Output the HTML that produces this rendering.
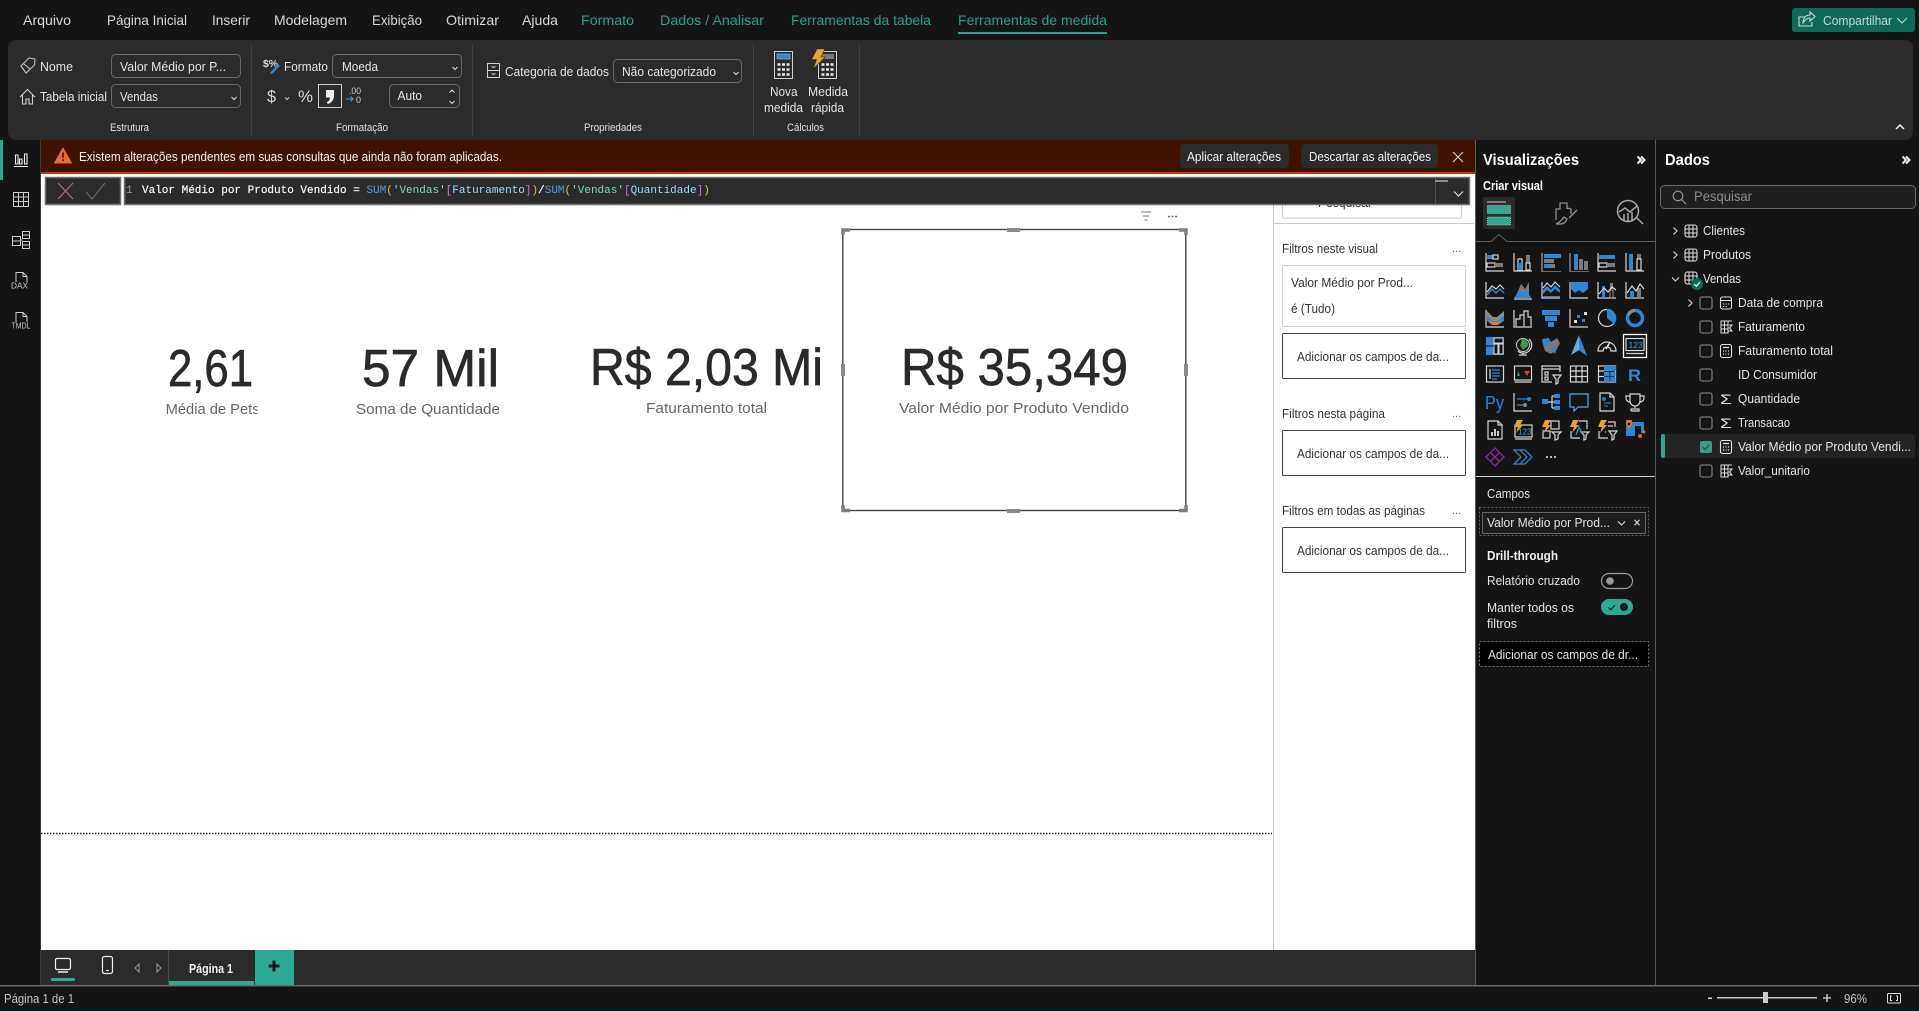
<!DOCTYPE html>
<html lang="pt-BR"><head><meta charset="utf-8"><title>Power BI</title>
<style>
html,body{margin:0;padding:0;width:1919px;height:1011px;overflow:hidden;background:#141414}
svg{display:block}
text{font-family:"Liberation Sans",sans-serif;font-size:13px;fill:#e4e4e4}
.m{font-size:14px;fill:#d8d8d8}
.g{font-size:14px;fill:#22a58c}
.s{font-size:11px;fill:#e0e0e0}
.w{font-size:13px;fill:#f2f2f2}
.d{font-size:13px;fill:#333}
.b{font-weight:bold}
.big{font-size:52px;fill:#2a2a2a;stroke:#2a2a2a;stroke-width:.7}
.lab{font-size:15px;fill:#666}
.f tspan{font-family:"Liberation Mono",monospace}
.f{font-family:"Liberation Mono",monospace;font-size:11px;fill:#fff;stroke:#fff;stroke-width:.15}
.i{fill:none;stroke:#d6d6d6;stroke-width:1.2}
.bl{fill:#2f86d4;stroke:none}
.gr{fill:#7a7a7a;stroke:none}
.bs{fill:none;stroke:#2f86d4;stroke-width:1.4}
.o{fill:#e8a030;stroke:none}
</style></head><body>
<svg width="1919" height="1011" viewBox="0 0 1919 1011" xmlns="http://www.w3.org/2000/svg">
<defs>
<g id="tb"><rect x="-6" y="-6" width="12" height="12" rx="2.5" fill="none" stroke="#e0e0e0" stroke-width="1.1"/><path d="M-2-6V6M2-6V6M-6-2H6M-6 2H6" fill="none" stroke="#e0e0e0" stroke-width="1"/></g>
<g id="ca"><rect x="-5.5" y="-6.5" width="11" height="13" rx="2" fill="none" stroke="#e0e0e0" stroke-width="1.1"/><path d="M-3-3.5H3M-3 0H-2M-.5 0H.5M2 0H3M-3 3H-2M-.5 3H.5M2 3H3" stroke="#e0e0e0" stroke-width="1.2" fill="none"/></g>
<g id="cf"><path d="M-5-6H2V6H-5ZM-5-2H2M-5 2H2M-1.5-6V6M2-6L6-6M3-2H6L3.5 1L6 4H2.5" fill="none" stroke="#e0e0e0" stroke-width="1"/></g>
<g id="cb"><rect x="-6" y="-6" width="12" height="12" rx="2" fill="none" stroke="#8a8a8a" stroke-width="1.1"/></g>
</defs>

<!-- base -->
<rect width="1919" height="1011" fill="#141414"/>
<rect x="8" y="40" width="1905" height="100" rx="8" fill="#2b2b2b"/>

<!-- menu -->
<text class="m" x="23" y="25" textLength="48" lengthAdjust="spacingAndGlyphs">Arquivo</text>
<text class="m" x="107" y="25" textLength="80" lengthAdjust="spacingAndGlyphs">Página Inicial</text>
<text class="m" x="212" y="25" textLength="38" lengthAdjust="spacingAndGlyphs">Inserir</text>
<text class="m" x="274" y="25" textLength="73" lengthAdjust="spacingAndGlyphs">Modelagem</text>
<text class="m" x="372" y="25" textLength="50" lengthAdjust="spacingAndGlyphs">Exibição</text>
<text class="m" x="446" y="25" textLength="53" lengthAdjust="spacingAndGlyphs">Otimizar</text>
<text class="m" x="522" y="25" textLength="36" lengthAdjust="spacingAndGlyphs">Ajuda</text>
<text class="g" x="581" y="25" textLength="53" lengthAdjust="spacingAndGlyphs">Formato</text>
<text class="g" x="660" y="25" textLength="104" lengthAdjust="spacingAndGlyphs">Dados / Analisar</text>
<text class="g" x="791" y="25" textLength="140" lengthAdjust="spacingAndGlyphs">Ferramentas da tabela</text>
<text class="g" x="958" y="25" textLength="149" lengthAdjust="spacingAndGlyphs">Ferramentas de medida</text>
<rect x="958" y="32" width="149" height="2" fill="#22a58c"/>

<!-- share -->
<rect x="1792" y="8" width="123" height="24" rx="3" fill="#0e6a58"/>
<path d="M1805 17H1799V26H1812V22M1803 23C1803 18 1806 15 1810 15V12L1815 16.500L1810 21V18C1807 18 1805 20 1803 23Z" fill="none" stroke="#c8d8d4" stroke-width="1.1"/>
<text x="1823" y="25" textLength="69" lengthAdjust="spacingAndGlyphs" style="font-size:13px;fill:#c6d6d2">Compartilhar</text>
<path d="M1897 18L1902 23L1907 18" fill="none" stroke="#c6d6d2" stroke-width="1.1"/>

<!-- ribbon: estrutura -->
<path d="M21 66L29 58L35 59L34.500 65L26 73ZM24 64L30 69" fill="none" stroke="#bdbdbd" stroke-width="1.1"/>
<text x="40" y="71" textLength="33" lengthAdjust="spacingAndGlyphs">Nome</text>
<rect x="111.500" y="54.500" width="129" height="23" rx="4" fill="#2b2b2b" stroke="#6a6a6a"/>
<text x="120" y="71" textLength="106" lengthAdjust="spacingAndGlyphs">Valor Médio por P...</text>
<path d="M20 97L27.500 89.500L35 97M22.500 95V104H26V99H29V104H32.500V95" fill="none" stroke="#cfcfcf" stroke-width="1.1"/>
<text x="40" y="101" textLength="67" lengthAdjust="spacingAndGlyphs">Tabela inicial</text>
<rect x="111.500" y="84.500" width="129" height="23" rx="4" fill="#2b2b2b" stroke="#6a6a6a"/>
<text x="120" y="101" textLength="38" lengthAdjust="spacingAndGlyphs">Vendas</text>
<path d="M231.500 97L234 99.500L236.500 97" fill="none" stroke="#ddd" stroke-width="1.1"/>
<rect x="251" y="44" width="1" height="92" fill="#3f3f3f"/>
<text class="s" x="110" y="131" textLength="39" lengthAdjust="spacingAndGlyphs">Estrutura</text>

<!-- formatacao -->
<text x="263" y="67" style="font-size:10px;font-weight:bold;fill:#ddd" textLength="15" lengthAdjust="spacingAndGlyphs">$%</text>
<path d="M270 73L278 64L280 66L272 74Z" fill="#2f86d4"/>
<text x="284" y="71" textLength="44" lengthAdjust="spacingAndGlyphs">Formato</text>
<rect x="332.500" y="54.500" width="129" height="23" rx="4" fill="#2b2b2b" stroke="#6a6a6a"/>
<text x="342" y="71" textLength="36" lengthAdjust="spacingAndGlyphs">Moeda</text>
<path d="M452.500 67L455 69.500L457.500 67" fill="none" stroke="#ddd" stroke-width="1.1"/>
<text x="267" y="102" style="font-size:17px;fill:#d8d8d8" textLength="9" lengthAdjust="spacingAndGlyphs">$</text>
<path d="M285 97.500L287 99.500L289 97.500" fill="none" stroke="#ccc" stroke-width="1"/>
<text x="298" y="102" style="font-size:17px;fill:#d8d8d8" textLength="15" lengthAdjust="spacingAndGlyphs">%</text>
<rect x="318.500" y="84.500" width="23" height="23" fill="none" stroke="#cfcfcf"/>
<path d="M326 90H334V96C334 100 331 103 328 104L326.500 102.500C328.500 101.500 330 100 330 97.500H326Z" fill="#f0f0f0"/>
<text x="349" y="94" style="font-size:9px;fill:#ccc" textLength="12" lengthAdjust="spacingAndGlyphs">.00</text>
<path d="M346 99H353M350.500 96.500L353 99L350.500 101.500" fill="none" stroke="#3f9be6" stroke-width="1.1"/>
<text x="356" y="103" style="font-size:9px;fill:#ccc" textLength="5" lengthAdjust="spacingAndGlyphs">0</text>
<rect x="389.500" y="84.500" width="70" height="23" rx="4" fill="#2b2b2b" stroke="#6a6a6a"/>
<text x="397.500" y="100" textLength="24.500" lengthAdjust="spacingAndGlyphs">Auto</text>
<path d="M449.500 92.500L452 90L454.500 92.500M449.500 101L452 103.500L454.500 101" fill="none" stroke="#ddd" stroke-width="1.1"/>
<rect x="472" y="44" width="1" height="92" fill="#3f3f3f"/>
<text class="s" x="336" y="131" textLength="52" lengthAdjust="spacingAndGlyphs">Formatação</text>

<!-- propriedades -->
<path d="M487.500 63.500H499.500V77.500H487.500ZM487.500 70.500H499.500M491.500 66.500L493.500 67.500L495.500 66.500M491.500 73.500L493.500 74.500L495.500 73.500" fill="none" stroke="#d0d0d0" stroke-width="1"/>
<text x="505" y="76" textLength="104" lengthAdjust="spacingAndGlyphs">Categoria de dados</text>
<rect x="613.500" y="59.500" width="128" height="23" rx="4" fill="#2b2b2b" stroke="#6a6a6a"/>
<text x="622" y="76" textLength="94" lengthAdjust="spacingAndGlyphs">Não categorizado</text>
<path d="M733.500 72L736 74.500L738.500 72" fill="none" stroke="#ddd" stroke-width="1.1"/>
<rect x="753" y="44" width="1" height="92" fill="#3f3f3f"/>
<text class="s" x="584" y="131" textLength="58" lengthAdjust="spacingAndGlyphs">Propriedades</text>

<!-- calculos -->
<rect x="774.500" y="51.500" width="18" height="27" fill="#2b2b2b" stroke="#d0d0d0"/>
<rect x="777" y="54" width="13" height="5" fill="#2f86d4" stroke="#9cc4e8" stroke-width=".6"/>
<path d="M777.500 64.500H780.500M782 64.500H785M786.500 64.500H789.500M777.500 69.500H780.500M782 69.500H785M786.500 69.500H789.500M777.500 74.500H780.500M782 74.500H785M786.500 74.500H789.500" stroke="#e8e8e8" stroke-width="2.500" fill="none"/>
<rect x="818.500" y="51.500" width="18" height="27" fill="#2b2b2b" stroke="#d0d0d0"/>
<rect x="821" y="54" width="13" height="5" fill="#7a7a7a"/>
<path d="M821.500 64.500H824.500M826 64.500H829M830.500 64.500H833.500M821.500 69.500H824.500M826 69.500H829M830.500 69.500H833.500M821.500 74.500H824.500M826 74.500H829M830.500 74.500H833.500" stroke="#e8e8e8" stroke-width="2.500" fill="none"/>
<path d="M817 49H825L821 57H825.500L813 69L816.500 59.500H811.500Z" fill="#eca02e" stroke="#2b2b2b" stroke-width=".6"/>
<text x="770" y="96" textLength="27.500" lengthAdjust="spacingAndGlyphs">Nova</text>
<text x="764" y="112" textLength="39" lengthAdjust="spacingAndGlyphs">medida</text>
<text x="808" y="96" textLength="40" lengthAdjust="spacingAndGlyphs">Medida</text>
<text x="811" y="112" textLength="33" lengthAdjust="spacingAndGlyphs">rápida</text>
<rect x="859" y="44" width="1" height="92" fill="#3f3f3f"/>
<text class="s" x="787" y="131" textLength="37" lengthAdjust="spacingAndGlyphs">Cálculos</text>
<path d="M1896 129L1900 125L1904 129" fill="none" stroke="#e6e6e6" stroke-width="1.6"/>

<!-- canvas -->
<rect x="41" y="172" width="1434" height="778" fill="#fff"/>
<rect x="40" y="140" width="1435" height="32" fill="#3f1300"/>
<rect x="40" y="172" width="1435" height="2" fill="#c43d00"/>
<path d="M63 148L71.500 163H54.500Z" fill="#e8683a" stroke="#e8683a" stroke-linejoin="round"/>
<rect x="62.200" y="152.500" width="1.600" height="5.500" fill="#3f1300"/><rect x="62.200" y="159.200" width="1.600" height="1.700" fill="#3f1300"/>
<text class="w" x="79" y="161" textLength="423" lengthAdjust="spacingAndGlyphs">Existem alterações pendentes em suas consultas que ainda não foram aplicadas.</text>
<rect x="1180" y="144" width="109" height="24" rx="4" fill="#2b2b2b"/>
<text class="w" x="1187" y="161" textLength="94" lengthAdjust="spacingAndGlyphs">Aplicar alterações</text>
<rect x="1301" y="144" width="137" height="24" rx="4" fill="#2b2b2b"/>
<text class="w" x="1309" y="161" textLength="122" lengthAdjust="spacingAndGlyphs">Descartar as alterações</text>
<path d="M1453 152L1463 162M1463 152L1453 162" stroke="#d8d8d8" stroke-width="1" fill="none"/>

<!-- filter pane -->
<rect x="1273" y="205" width="1" height="745" fill="#c8c8c8"/>
<rect x="1282.500" y="190" width="179" height="28" rx="1" fill="#fff" stroke="#c8c8c8"/>
<text class="d" x="1318" y="207" textLength="54" lengthAdjust="spacingAndGlyphs">Pesquisar</text>
<path d="M1307 199L1304 202L1307 205" fill="none" stroke="#555"/>
<rect x="1273" y="223" width="201" height="1" fill="#c8c8c8"/>
<text class="d" x="1282" y="253" textLength="96" lengthAdjust="spacingAndGlyphs">Filtros neste visual</text>
<text class="d" x="1452" y="252" style="font-size:11px;fill:#666">...</text>
<rect x="1282.500" y="265.500" width="183" height="61" rx="1" fill="#fff" stroke="#d0d0d0"/>
<text class="d" x="1291" y="287" textLength="122" lengthAdjust="spacingAndGlyphs">Valor Médio por Prod...</text>
<text class="d" x="1291" y="313" textLength="44" lengthAdjust="spacingAndGlyphs">é (Tudo)</text>
<rect x="1282.500" y="333.500" width="183" height="45" rx="1" fill="#fff" stroke="#444"/>
<text class="d" x="1297" y="361" textLength="152" lengthAdjust="spacingAndGlyphs">Adicionar os campos de da...</text>
<text class="d" x="1282" y="418" textLength="103" lengthAdjust="spacingAndGlyphs">Filtros nesta página</text>
<text class="d" x="1452" y="417" style="font-size:11px;fill:#666">...</text>
<rect x="1282.500" y="430.500" width="183" height="45" rx="1" fill="#fff" stroke="#444"/>
<text class="d" x="1297" y="458" textLength="152" lengthAdjust="spacingAndGlyphs">Adicionar os campos de da...</text>
<text class="d" x="1282" y="515" textLength="143" lengthAdjust="spacingAndGlyphs">Filtros em todas as páginas</text>
<text class="d" x="1452" y="514" style="font-size:11px;fill:#666">...</text>
<rect x="1282.500" y="527.500" width="183" height="45" rx="1" fill="#fff" stroke="#444"/>
<text class="d" x="1297" y="555" textLength="152" lengthAdjust="spacingAndGlyphs">Adicionar os campos de da...</text>

<!-- formula bar -->
<rect x="45.500" y="177.500" width="75" height="27" fill="#2b2b2b" stroke="#6e6e6e" stroke-width="1.500"/>
<path d="M58 183L73 199M73 183L58 199" stroke="#c06a74" stroke-width="1.200" fill="none"/>
<path d="M86 192L92 199L105 183" stroke="#6a6a6a" stroke-width="1.200" fill="none"/>
<rect x="124.500" y="177.500" width="1345" height="27" fill="#2b2b2b" stroke="#6e6e6e" stroke-width="1.500"/>
<text class="f" x="126" y="193" style="stroke:none"><tspan fill="#9a9a9a">1</tspan></text>
<text class="f" x="142" y="193">Valor Médio por Produto Vendido = <tspan fill="#4f9fe0" stroke="none">SUM</tspan><tspan fill="#e6c04a" stroke="none">(</tspan><tspan fill="#7fd6c4" stroke="none">'Vendas'</tspan><tspan fill="#d070d8" stroke="none">[</tspan><tspan fill="#9cdcfe" stroke="none">Faturamento</tspan><tspan fill="#d070d8" stroke="none">]</tspan><tspan fill="#e6c04a" stroke="none">)</tspan>/<tspan fill="#4f9fe0" stroke="none">SUM</tspan><tspan fill="#e6c04a" stroke="none">(</tspan><tspan fill="#7fd6c4" stroke="none">'Vendas'</tspan><tspan fill="#d070d8" stroke="none">[</tspan><tspan fill="#9cdcfe" stroke="none">Quantidade</tspan><tspan fill="#d070d8" stroke="none">]</tspan><tspan fill="#e6c04a" stroke="none">)</tspan></text>
<rect x="1435" y="178" width="1" height="26" fill="#555"/>
<rect x="1435" y="180" width="13" height="2" fill="#8a8a8a"/>
<path d="M1454 191.500L1458.500 196L1463 191.500" fill="none" stroke="#ddd" stroke-width="1.200"/>

<!-- visuals -->
<text class="big" x="168" y="386" textLength="85" lengthAdjust="spacingAndGlyphs">2,61</text>
<svg x="160" y="395" width="97.500" height="25" overflow="hidden"><text class="lab" x="5.600" y="19" textLength="94" lengthAdjust="spacingAndGlyphs">Média de Pets</text></svg>
<text class="big" x="362" y="386" textLength="137" lengthAdjust="spacingAndGlyphs">57 Mil</text>
<text class="lab" x="356" y="414" textLength="144" lengthAdjust="spacingAndGlyphs">Soma de Quantidade</text>
<text class="big" x="590" y="385" textLength="233" lengthAdjust="spacingAndGlyphs">R$ 2,03 Mi</text>
<text class="lab" x="646" y="413" textLength="121" lengthAdjust="spacingAndGlyphs">Faturamento total</text>
<rect x="842.800" y="229.500" width="343" height="281" fill="none" stroke="#444" stroke-width="1.400"/>
<text class="big" x="901" y="385" textLength="227" lengthAdjust="spacingAndGlyphs">R$ 35,349</text>
<text class="lab" x="899" y="413" textLength="230" lengthAdjust="spacingAndGlyphs">Valor Médio por Produto Vendido</text>
<path d="M843 235V230H850M1179 230H1186V235M843 505V510.500H850M1179 510.500H1186V505" fill="none" stroke="#808080" stroke-width="3.500"/>
<rect x="1007" y="228" width="13" height="4" fill="#8a8a8a"/><rect x="1007" y="509" width="13" height="4" fill="#8a8a8a"/>
<rect x="841" y="364" width="4" height="12" fill="#8a8a8a"/><rect x="1184" y="364" width="4" height="12" fill="#8a8a8a"/>
<path d="M1141 212H1151M1143 216H1149M1144.500 220H1147.500" stroke="#777" fill="none"/>
<path d="M1168 216.500H1170M1171.500 216.500H1173.500M1175 216.500H1177" stroke="#666" stroke-width="1.400" fill="none"/>
<path d="M41 833.500H1272" stroke="#222" stroke-width="1.500" stroke-dasharray="1.500 1.500" fill="none"/>

<!-- left rail -->
<rect x="40" y="140" width="1" height="845" fill="#3a3a3a"/>
<rect x="0" y="140" width="3" height="40" fill="#2bab92"/>
<path d="M14 166.500H28M15.500 155V164H18V155ZM19.500 159V164H22V159ZM24.500 154V164H27V154Z" fill="none" stroke="#eee" stroke-width="1.100"/>
<path d="M13.500 192.500H28.500V206.500H13.500ZM13.500 197H28.500M13.500 201.500H28.500M18.500 192.500V206.500M23.500 192.500V206.500" fill="none" stroke="#cfcfcf"/>
<path d="M12.500 236.500H20.500V245.500H12.500ZM12.500 241H20.500M22.500 231.500H29.500V238.500H22.500ZM22.500 235H29.500M22.500 241.500H29.500V248.500H22.500ZM22.500 245H29.500M20.500 240H22.500" fill="none" stroke="#cfcfcf"/>
<path d="M16 282V272.500H23L27 276.500V282M23 272.500V276.500H27" fill="none" stroke="#cfcfcf"/>
<text x="11" y="288.500" style="font-size:8px;fill:#c8c8c8" textLength="17" lengthAdjust="spacingAndGlyphs">DAX</text>
<path d="M16 322V312.500H23L27 316.500V322M23 312.500V316.500H27" fill="none" stroke="#cfcfcf"/>
<text x="11.500" y="328.500" style="font-size:8px;fill:#c8c8c8" textLength="19" lengthAdjust="spacingAndGlyphs">TMDL</text>

<!-- bottom tabs -->
<rect x="41" y="950" width="1434" height="35" fill="#2b2b2b"/>
<rect x="55.500" y="958.500" width="15" height="11" rx="1.500" fill="none" stroke="#eee" stroke-width="1.200"/>
<path d="M58 972H68" stroke="#eee" stroke-width="1.500"/>
<rect x="51" y="978" width="24" height="3" rx="1" fill="#2bab92"/>
<rect x="102.500" y="956.500" width="10" height="17" rx="2" fill="none" stroke="#eee" stroke-width="1.200"/>
<path d="M106 970.500H109" stroke="#eee"/>
<path d="M139 964V972L135 968Z" fill="none" stroke="#999"/>
<path d="M157 964V972L161 968Z" fill="none" stroke="#999"/>
<rect x="168" y="950" width="1" height="35" fill="#4a4a4a"/>
<text class="b" x="189" y="973" textLength="44" lengthAdjust="spacingAndGlyphs" style="font-size:13px;fill:#f2f2f2">Página 1</text>
<rect x="169" y="981" width="85" height="4" fill="#2bab92"/>
<rect x="255" y="950" width="39" height="35" fill="#2bab92"/>
<path d="M268.500 966H279.500M274 960.500V971.500" stroke="#1a1a1a" stroke-width="3"/>
<rect x="0" y="985" width="1919" height="1.500" fill="#6a6a6a"/>
<text x="4" y="1003" textLength="70" lengthAdjust="spacingAndGlyphs" style="font-size:13px;fill:#c4c4c4">Página 1 de 1</text>
<rect x="1708" y="997.500" width="4" height="1.500" fill="#ddd"/>
<rect x="1717" y="997" width="100" height="1.500" fill="#ccc"/>
<rect x="1763" y="992" width="5" height="11" fill="#ccc"/>
<path d="M1823 998H1831M1827 994V1002" stroke="#ddd" stroke-width="1.300"/>
<text x="1844" y="1003" textLength="23" lengthAdjust="spacingAndGlyphs" style="font-size:13px;fill:#c4c4c4">96%</text>
<rect x="1887.500" y="993.500" width="13" height="9.500" rx="1" fill="none" stroke="#ddd"/>
<path d="M1892 996H1890.500V1000.500H1892M1896 996H1897.500V1000.500H1896" fill="none" stroke="#ddd"/>
<rect x="0" y="1009" width="1919" height="2" fill="#0b1a1f"/>

<!-- panel dividers -->
<rect x="1475" y="140" width="1" height="845" fill="#5a5a5a"/>
<rect x="1655" y="140" width="1" height="845" fill="#5a5a5a"/>

<!-- Visualizacoes -->
<text class="b" x="1483" y="165" textLength="96" lengthAdjust="spacingAndGlyphs" style="font-size:16px;fill:#fff">Visualizações</text>
<path d="M1637.500 156.500L1641 160L1637.500 163.500M1641 156.500L1644.500 160L1641 163.500" fill="none" stroke="#f0f0f0" stroke-width="2"/>
<text class="b" x="1483" y="190" textLength="60" lengthAdjust="spacingAndGlyphs" style="font-size:12.500px;fill:#fff">Criar visual</text>
<rect x="1483" y="197" width="32" height="32" rx="2" fill="#2b2b2b"/>
<path d="M1487 202H1506" stroke="#cfcfcf" stroke-width="1"/>
<rect x="1487.500" y="205.500" width="23" height="8" fill="#2bab92" stroke="#cfcfcf" stroke-width=".8" stroke-dasharray="1 1"/>
<rect x="1487.500" y="217" width="23" height="8" fill="#2bab92" stroke="#cfcfcf" stroke-width=".8" stroke-dasharray="1 1"/>
<path d="M1556 220V209H1560V203H1567V209M1567 208L1571 209V214M1569 218L1577 210M1560 224C1564 224 1566 222 1567 219L1564 217C1562 219 1561 222 1556 224H1560Z" fill="none" stroke="#8f8f8f" stroke-width="1.300"/>
<circle cx="1628" cy="211" r="10.500" fill="none" stroke="#a8a8a8" stroke-width="1.500"/>
<path d="M1619 212L1625 208L1630 212L1637 206M1624 220V214M1628 221V213M1632 220V212M1636 217L1643 224" fill="none" stroke="#a8a8a8" stroke-width="1.500"/>
<path d="M1476 241.500H1491L1499 234.500L1507 241.500H1655" fill="none" stroke="#5f5f5f" stroke-width="1"/>

<!-- grid row 1 -->
<g transform="translate(1495 262)"><path class="i" d="M-9-9V9H9"/><rect class="bl" x="-8" y="-7" width="6" height="4"/><rect class="i" x="-2" y="-7" width="5" height="4"/><rect class="i" x="-8" y="1" width="8" height="4"/><rect class="gr" x="0" y="1" width="8" height="4"/></g>
<g transform="translate(1523 262)"><path class="i" d="M-9-9V9H9"/><rect class="i" x="-5" y="-3" width="4" height="11"/><rect class="bl" x="-5" y="1" width="4" height="7"/><rect class="gr" x="3" y="-7" width="4" height="8"/><rect class="i" x="3" y="1" width="4" height="7"/></g>
<g transform="translate(1551 262)"><path d="M-10-9H-8V9H10V10H-10Z" fill="#6a6a6a"/><rect class="bl" x="-7" y="-8" width="17" height="4"/><rect class="gr" x="-7" y="-3" width="10" height="4"/><rect class="bl" x="-7" y="2" width="5" height="4"/><rect class="gr" x="-2" y="2" width="6" height="4"/></g>
<g transform="translate(1579 262)"><path d="M-10-9H-8V9H10V10H-10Z" fill="#6a6a6a"/><rect class="bl" x="-5" y="-8" width="4" height="16"/><rect class="gr" x="0" y="-3" width="4" height="11"/><rect class="gr" x="5" y="-1" width="4" height="9"/></g>
<g transform="translate(1607 262)"><path class="i" d="M-9-9V9H9"/><rect class="bl" x="-8" y="-7" width="16" height="4"/><rect class="i" x="-8" y="1" width="8" height="4"/><rect class="gr" x="0" y="1" width="8" height="4"/></g>
<g transform="translate(1635 262)"><path class="i" d="M-9-9V9H9"/><rect class="bl" x="-6" y="-8" width="4" height="16"/><rect class="gr" x="2" y="-8" width="4" height="5"/><rect class="i" x="2" y="-3" width="4" height="11"/></g>
<!-- row 2 -->
<g transform="translate(1495 290)"><path class="i" d="M-9-8V8H9"/><path class="i" d="M-8 2L-3-4L1-1L5-5L9-1"/><path class="bs" d="M-8 5L-3-1L1 3L5-1L9 3"/></g>
<g transform="translate(1523 290)"><path d="M-8 8L-2-6L2-1L6-8V8Z" fill="#7a7a7a"/><path d="M-9 8L-3 0L1 3L4 0L8 8Z" fill="#2f86d4"/><path class="i" d="M-9 9H9"/></g>
<g transform="translate(1551 290)"><path class="i" d="M-9-8V8H9"/><path class="i" d="M-8-2L-4-7L0-3L4-8L9-3"/><path d="M-8 0L-4-4L0 0L4-5L9 0V7H-8Z" fill="#2f86d4"/><path d="M-8 4L-4 0L0 3L4-1L9 3V6H-8Z" fill="#141414"/></g>
<g transform="translate(1579 290)"><path class="i" d="M-9-8V8H9"/><path d="M-8-8H9V-1L4 3L0 0L-4 3L-8-1Z" fill="#2f86d4"/></g>
<g transform="translate(1607 290)"><path class="i" d="M-9-8V8H9"/><rect class="bl" x="-5" y="-4" width="3" height="12"/><rect class="gr" x="3" y="-7" width="3" height="6"/><path class="i" d="M-8 4L-3-2L1 2L5-3L9 0"/><rect x="3" y="0" width="3" height="8" fill="none" stroke="#aaa" stroke-width=".8"/></g>
<g transform="translate(1635 290)"><path class="i" d="M-9-8V8H9"/><rect class="gr" x="2" y="-2" width="4" height="10"/><rect class="bl" x="-5" y="1" width="4" height="7"/><path class="i" d="M-8 3L-3-4L1 1L5-6L9-1"/></g>
<!-- row 3 -->
<g transform="translate(1495 318)"><path class="i" d="M-9-8V9H9"/><path d="M-8-7L-2-1L2-1L9-7V-2L3 3H-3L-8-2Z" fill="#8a8a8a"/><path d="M-8-2L-3 3L3 3L9-2V3L3 7H-3L-8 3Z" fill="#2f86d4"/><path d="M-7 2L-3 7H3L7 2L3 4H-3Z" fill="#e87a20"/></g>
<g transform="translate(1523 318)"><path class="i" d="M-9-8V9H9"/><path class="i" d="M-7 8V1H-3V-3H1V8M1-3V-7H5V-1H8V8"/></g>
<g transform="translate(1551 318)"><rect class="bl" x="-9" y="-8" width="18" height="5"/><rect class="bl" x="-6" y="-2" width="12" height="5"/><rect class="bl" x="-3" y="4" width="6" height="5"/></g>
<g transform="translate(1579 318)"><path class="i" d="M-9-9V9H9"/><rect x="5" y="-6" width="3" height="3" fill="#ddd"/><rect class="bl" x="-2" y="-3" width="3" height="3"/><rect class="bl" x="3" y="1" width="3" height="3"/><rect x="-5" y="2" width="3" height="3" fill="#ddd"/></g>
<g transform="translate(1607 318)"><circle class="i" r="8.500"/><path class="bl" d="M0-9A9 9 0 0 1 7 6L0 0Z"/></g>
<g transform="translate(1635 318)"><circle r="7.500" fill="none" stroke="#2f86d4" stroke-width="3.500"/><path d="M0-9A9 9 0 0 0-8-4L-5-2.500A6 6 0 0 1 0-6Z" fill="#8a8a8a"/></g>
<!-- row 4 -->
<g transform="translate(1495 346)"><rect x="-9" y="-9" width="18" height="18" fill="#2f86d4"/><rect x="-1" y="-8" width="9" height="5" fill="#141414" stroke="#d6d6d6"/><rect x="-1" y="-2" width="4" height="10" fill="#141414" stroke="#d6d6d6"/><rect x="4" y="-2" width="4" height="10" fill="#141414" stroke="#d6d6d6"/><path d="M-9 0H-1" stroke="#141414"/></g>
<g transform="translate(1523 346)"><circle cy="-1" r="6.500" fill="#141414" stroke="#cfcfcf"/><path d="M-1-7C3-7 6-3 5 0L0 4L-3 0Z" fill="#2f9a58"/><path class="i" d="M-5 5A8 8 0 0 0 6-7M-4 9H4M0 7V9"/></g>
<g transform="translate(1551 346)"><path d="M-9-5L-3-8L0-4L6-8L9-3L6 3L0 8L-6 5Z" fill="#7a7a7a"/><path d="M-9-7L-2-8L-1-1L-7 1ZM0 3L7-1L4 8Z" fill="#2f86d4"/></g>
<g transform="translate(1579 346)"><path d="M0-11L-8 9L0 4Z" fill="#59b4d9"/><path d="M0-11L8 10L0 4Z" fill="#2f86d4"/></g>
<g transform="translate(1607 346)"><path class="i" d="M-9 5A9 9 0 0 1 9 5H4A4 4 0 0 0-4 5Z"/><path d="M-1 3L3-4" stroke="#eee" stroke-width="1.500"/></g>
<rect x="1623.500" y="334.500" width="23" height="23" fill="none" stroke="#fff" stroke-width="1.300"/>
<g transform="translate(1635 346)"><rect class="i" x="-9" y="-7.500" width="18" height="12"/><path class="i" d="M-9 7.500H9"/><text x="-6.500" y="2.200" style="font-size:8.500px;fill:#4a9be0">123</text></g>
<!-- row 5 -->
<g transform="translate(1495 374)"><rect class="i" x="-8.500" y="-8" width="17" height="16"/><path class="i" d="M-5-5V5"/><path d="M-3-4H5M-3-1H5M-3 2H5M-3 5H2" stroke="#2f86d4" stroke-width="1.300"/></g>
<g transform="translate(1523 374)"><rect class="i" x="-8.500" y="-8" width="17" height="14"/><path class="i" d="M-8.500 8H8.500"/><path d="M-3 2L-6 2L-4.500-3Z" fill="#2f9a58"/><path d="M1-3H7L4 2Z" fill="#d83b3b"/></g>
<g transform="translate(1551 374)"><path class="i" d="M9-2V-8H-9V8H1M-9-5H9"/><rect class="i" x="-6" y="-2" width="3" height="3"/><rect class="i" x="-6" y="3" width="3" height="3"/><path class="i" d="M2 1H10L7 5V9L5 10V5Z"/></g>
<g transform="translate(1579 374)"><rect class="i" x="-8.500" y="-8" width="17" height="16"/><path class="i" d="M-8.500-3H8.500M-8.500 2.500H8.500M-3-8V8M3-8V8"/></g>
<g transform="translate(1607 374)"><rect class="i" x="-8.500" y="-8" width="17" height="16"/><rect class="bl" x="-3" y="-8" width="12" height="5"/><rect class="bl" x="-3" y="-2.200" width="5.500" height="4.500"/><rect class="bl" x="3.200" y="-2.200" width="5.500" height="4.500"/><rect class="bl" x="-3" y="3" width="5.500" height="5"/><rect class="bl" x="3.200" y="3" width="5.500" height="5"/><path class="i" d="M-8.500-3H-3M-8.500 2.500H-3"/></g>
<text x="1628" y="381" style="font-size:17px;font-weight:bold;fill:#2f86d4" textLength="13" lengthAdjust="spacingAndGlyphs">R</text>
<!-- row 6 -->
<text x="1485" y="409" style="font-size:18px;fill:#2f86d4" textLength="19" lengthAdjust="spacingAndGlyphs">Py</text>
<g transform="translate(1523 402)"><path class="i" d="M-9-9V9H9"/><path d="M-6-3H4M-6 3H0" stroke="#2f86d4" stroke-width="1.200"/><circle cx="6" cy="-3" r="2" fill="#2f86d4"/><circle cx="2" cy="3" r="2" fill="#8a8a8a"/></g>
<g transform="translate(1551 402)"><rect class="bl" x="-9" y="-3" width="6" height="5"/><rect class="bl" x="3" y="-8" width="6" height="4"/><rect class="bl" x="3" y="-2" width="6" height="4"/><rect class="bl" x="3" y="4" width="6" height="4"/><path class="i" d="M-3 0H1M1-6V6M1-6H3M1 0H3M1 6H3"/></g>
<g transform="translate(1579 402)"><path fill="none" stroke="#59a8e8" stroke-width="1.200" d="M-9-8H9V5H-1L-5 9V5H-9Z"/></g>
<g transform="translate(1607 402)"><path class="i" d="M-7-9H3L7-5V9H-7ZM3-9V-5H7"/><circle cx="-3" cy="-3" r="1.200" class="bs"/><path d="M-3 1H4M-3 4H1" stroke="#2f86d4"/></g>
<g transform="translate(1635 402)"><path class="i" d="M-5-8H5V-1A5 5 0 0 1-5-1ZM-5-6H-9V-4A4 4 0 0 0-5 0M5-6H9V-4A4 4 0 0 1 5 0M0 4V6M-4 9V7H4V9H-4"/></g>
<!-- row 7 -->
<g transform="translate(1495 430)"><path class="i" d="M-7-9H3L7-5V9H-7ZM3-9V-5H7"/><rect x="-4" y="2" width="2" height="4" fill="#ccc"/><rect x="-1" y="-1" width="2" height="7" fill="#ccc"/><rect x="2" y="1" width="2" height="5" fill="#ccc"/></g>
<g transform="translate(1523 430)"><rect class="i" x="-8" y="-5" width="17" height="12"/><path class="i" d="M-8 9H9"/><text x="-5" y="4.500" style="font-size:8px;fill:#4a9be0">123</text><path class="o" d="M-6-10H0L-3-5H0L-7 3L-5-3H-9Z"/></g>
<g transform="translate(1551 430)"><rect class="i" x="0" y="-9" width="8" height="8"/><rect class="i" x="-8" y="1" width="7" height="7"/><path class="i" d="M1 2H10L7 5V9L4 10V5Z"/><path class="o" d="M-6-10H0L-3-5H0L-7 3L-5-3H-9Z"/></g>
<g transform="translate(1579 430)"><path class="i" d="M0-9H8V-1M-8 1V8H1"/><path class="i" d="M2 2H10L7 5V9L5 10V5Z"/><path class="bs" d="M-3 5L0-3L3 3"/><path class="o" d="M-6-10H0L-3-5H0L-7 3L-5-3H-9Z"/></g>
<g transform="translate(1607 430)"><path class="i" d="M1-8H8V-3M-8 1V8H1M1-4H6M-2 2H-1"/><path class="i" d="M2 1H10L7 5V9L5 10V5Z"/><path class="o" d="M-6-10H0L-3-5H0L-7 3L-5-3H-9Z"/></g>
<g transform="translate(1635 430)"><path class="bl" d="M-4-8H9V3H6V-4H-4Z"/><path d="M-9-4L0-4V6H-9Z" fill="#2f86d4"/><path d="M-9-10H-3V-5L-6-1L-9-5Z" fill="#e0711c"/><circle cx="-6" cy="-6" r="1.200" fill="#141414"/><circle cx="5" cy="6" r="2" fill="#e0711c"/><circle cx="9" cy="2" r="1.500" fill="#e0711c"/></g>
<!-- row 8 -->
<g transform="translate(1495 457)" fill="none" stroke="#8a2aa8" stroke-width="1.300"><path d="M0-9L9 0L0 9L-9 0ZM-4.500-4.500L4.500 4.500M4.500-4.500L-4.500 4.500"/></g>
<g transform="translate(1523 457)" fill="none" stroke="#2f86d4" stroke-width="1.300"><path d="M-9-7H2L9 0L2 7H-9L-2 0ZM-3-7L4 0L-3 7"/></g>
<path d="M1546 457H1548M1550 457H1552M1554 457H1556" stroke="#f2f2f2" stroke-width="1.600"/>

<!-- campos -->
<rect x="1476" y="476" width="179" height="1" fill="#cfcfcf"/>
<text x="1487" y="498" textLength="43" lengthAdjust="spacingAndGlyphs">Campos</text>
<rect x="1479.500" y="507.500" width="169" height="28" fill="none" stroke="#666" stroke-dasharray="2 2"/>
<rect x="1482.500" y="512.500" width="163" height="21" fill="#1c1c1c" stroke="#666"/>
<text x="1487" y="527" textLength="123" lengthAdjust="spacingAndGlyphs">Valor Médio por Prod...</text>
<path d="M1618 521.500L1621.500 525L1625 521.500" fill="none" stroke="#ddd" stroke-width="1.100"/>
<path d="M1634.500 519.800L1639.500 525.200M1639.500 519.800L1634.500 525.200" fill="none" stroke="#ddd" stroke-width="1.100"/>
<text class="b" x="1487" y="560" textLength="71" lengthAdjust="spacingAndGlyphs" style="font-size:13px;fill:#f2f2f2">Drill-through</text>
<text x="1487" y="585" textLength="93" lengthAdjust="spacingAndGlyphs">Relatório cruzado</text>
<rect x="1601.500" y="573.500" width="31" height="15" rx="7.500" fill="#141414" stroke="#9a9a9a" stroke-width="1.200"/>
<circle cx="1610" cy="581" r="3.800" fill="#9a9a9a"/>
<text x="1487" y="612" textLength="87" lengthAdjust="spacingAndGlyphs">Manter todos os</text>
<text x="1487" y="628" textLength="30" lengthAdjust="spacingAndGlyphs">filtros</text>
<rect x="1601" y="599" width="32" height="16" rx="8" fill="#2bab92"/>
<circle cx="1624" cy="607" r="4" fill="#1a1a1a"/>
<path d="M1608.500 607.500L1610.800 609.800L1615 605" fill="none" stroke="#1a1a1a" stroke-width="1"/>
<rect x="1479.500" y="641.500" width="169" height="25" fill="#000" stroke="#777" stroke-dasharray="2 2"/>
<text x="1488" y="659" textLength="150" lengthAdjust="spacingAndGlyphs">Adicionar os campos de dr...</text>

<!-- dados -->
<text class="b" x="1665" y="165" textLength="45" lengthAdjust="spacingAndGlyphs" style="font-size:16px;fill:#fff">Dados</text>
<path d="M1902.500 156.500L1906 160L1902.500 163.500M1906 156.500L1909.500 160L1906 163.500" fill="none" stroke="#f0f0f0" stroke-width="2"/>
<rect x="1660.500" y="185.500" width="255" height="23" rx="4" fill="#1f1f1f" stroke="#6a6a6a"/>
<circle cx="1678" cy="196" r="4.800" fill="none" stroke="#9a9a9a" stroke-width="1.100"/><path d="M1681.500 199.500L1686 204" stroke="#9a9a9a" stroke-width="1.100"/>
<text x="1694" y="201" textLength="58" lengthAdjust="spacingAndGlyphs" style="font-size:14px;fill:#8c8c8c">Pesquisar</text>

<path d="M1673.500 227.500L1677 231L1673.500 234.500M1673.500 251.500L1677 255L1673.500 258.500" fill="none" stroke="#d8d8d8" stroke-width="1.100"/>
<path d="M1672 277.500L1675.500 281L1679 277.500" fill="none" stroke="#d8d8d8" stroke-width="1.100"/>
<use href="#tb" x="1691" y="231"/><use href="#tb" x="1691" y="255"/><use href="#tb" x="1691" y="278"/>
<text x="1703" y="235" textLength="42" lengthAdjust="spacingAndGlyphs">Clientes</text>
<text x="1703" y="259" textLength="48" lengthAdjust="spacingAndGlyphs">Produtos</text>
<text x="1703" y="283" textLength="38" lengthAdjust="spacingAndGlyphs">Vendas</text>
<circle cx="1697" cy="284" r="6" fill="#0e6a58"/><path d="M1694 284L1696.300 286.200L1700 282" fill="none" stroke="#e8f4f0" stroke-width="1.200"/>

<path d="M1688.500 299.500L1692 303L1688.500 306.500" fill="none" stroke="#d8d8d8" stroke-width="1.100"/>
<rect x="1661" y="434" width="254" height="24" rx="3" fill="#242424"/>
<rect x="1661" y="434" width="4" height="24" rx="2" fill="#2bab92"/>
<use href="#cb" x="1706" y="303"/><use href="#cb" x="1706" y="327"/><use href="#cb" x="1706" y="351"/><use href="#cb" x="1706" y="375"/><use href="#cb" x="1706" y="399"/><use href="#cb" x="1706" y="423"/><use href="#cb" x="1706" y="471"/>
<rect x="1700" y="441" width="12" height="12" rx="2" fill="#3a9c88"/><path d="M1702.500 447L1705 449.500L1709.500 444.500" fill="none" stroke="#1c5c50" stroke-width="1.200"/>

<g transform="translate(1726 303)"><rect x="-5.500" y="-6" width="11" height="12" rx="2" fill="none" stroke="#e0e0e0" stroke-width="1.100"/><path d="M-5.500-2.500H5.500M-3 1H-1.800M-.5 1H.7M2 1H3.200M-3 3.500H-1.800M-.5 3.500H.7" stroke="#e0e0e0" fill="none"/></g>
<use href="#cf" x="1726" y="327"/><use href="#ca" x="1726" y="351"/>
<text x="1720" y="404" style="font-size:14px;fill:#e0e0e0" textLength="12" lengthAdjust="spacingAndGlyphs">Σ</text>
<text x="1720" y="428" style="font-size:14px;fill:#e0e0e0" textLength="12" lengthAdjust="spacingAndGlyphs">Σ</text>
<use href="#ca" x="1726" y="447"/><use href="#cf" x="1726" y="471"/>

<text x="1738" y="307" textLength="85" lengthAdjust="spacingAndGlyphs">Data de compra</text>
<text x="1738" y="331" textLength="67" lengthAdjust="spacingAndGlyphs">Faturamento</text>
<text x="1738" y="355" textLength="95" lengthAdjust="spacingAndGlyphs">Faturamento total</text>
<text x="1738" y="379" textLength="79" lengthAdjust="spacingAndGlyphs">ID Consumidor</text>
<text x="1738" y="403" textLength="62" lengthAdjust="spacingAndGlyphs">Quantidade</text>
<text x="1738" y="427" textLength="52" lengthAdjust="spacingAndGlyphs">Transacao</text>
<text x="1738" y="451" textLength="173" lengthAdjust="spacingAndGlyphs">Valor Médio por Produto Vendi...</text>
<text x="1738" y="475" textLength="72" lengthAdjust="spacingAndGlyphs">Valor_unitario</text>
</svg>
</body></html>
